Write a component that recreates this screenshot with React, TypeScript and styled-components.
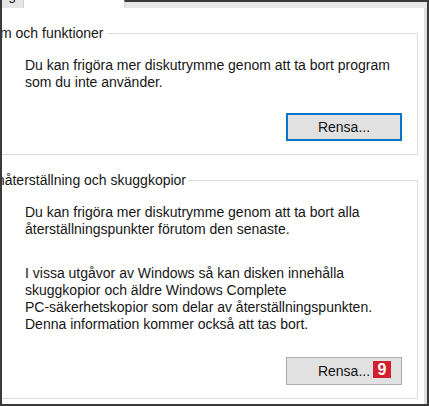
import styled, { createGlobalStyle } from "styled-components";

const GlobalStyle = createGlobalStyle`
  html, body {
    margin: 0;
    padding: 0;
    background: #ffffff;
  }
  body {
    font-family: "Liberation Sans", Arial, sans-serif;
    color: #161616;
  }
`;

const App = () => {
  return (
    <>
      <GlobalStyle />
      <Frame>
        <TabStrip>
          <Tab>
            <TabLabel>Diskrensning</TabLabel>
          </Tab>
          <ActiveTab />
          <TabFill />
        </TabStrip>
        <Panel>
          <GroupBox $top={17}>
            <Legend>Program och funktioner</Legend>
            <GroupBody>
              <Text>
                Du kan frigöra mer diskutrymme genom att ta bort program
                <br />
                som du inte använder.
              </Text>
              <ButtonRow $gap={22}>
                <Button $focused>Rensa...</Button>
              </ButtonRow>
            </GroupBody>
          </GroupBox>
          <GroupBox $top={17}>
            <Legend>Systemåterställning och skuggkopior</Legend>
            <GroupBody>
              <Text>
                Du kan frigöra mer diskutrymme genom att ta bort alla
                <br />
                återställningspunkter förutom den senaste.
              </Text>
              <Text $gap={27}>
                I vissa utgåvor av Windows så kan disken innehålla
                <br />
                skuggkopior och äldre Windows Complete
                <br />
                PC-säkerhetskopior som delar av återställningspunkten.
                <br />
                Denna information kommer också att tas bort.
              </Text>
              <ButtonRow $gap={24}>
                <Button>
                  Rensa...
                  <Badge>9</Badge>
                </Button>
              </ButtonRow>
            </GroupBody>
          </GroupBox>
        </Panel>
      </Frame>
    </>
  );
};

export default App;

const Frame = styled.div`
  width: 429px;
  height: 406px;
  box-sizing: border-box;
  border: 2px solid #3a3a3a;
  border-top: none;
  overflow: hidden;
  display: flex;
  flex-direction: column;
  background: #ffffff;
`;

const TabStrip = styled.div`
  display: flex;
  height: 8px;
  flex-shrink: 0;
`;

const Tab = styled.div`
  width: 22px;
  box-sizing: border-box;
  background: #e6e6e6;
  border-right: 1px solid #d2d2d2;
  overflow: hidden;
  display: flex;
  justify-content: flex-end;
  padding-right: 7px;
`;

const TabLabel = styled.span`
  font-size: 14px;
  line-height: 14px;
  margin-top: -12px;
  white-space: nowrap;
  color: #222;
`;

const ActiveTab = styled.div`
  width: 100px;
  background: #ffffff;
`;

const TabFill = styled.div`
  flex: 1;
  box-sizing: border-box;
  background: #e8e8e8;
  border-top: 2px solid #3a3a3a;
  border-left: 1px solid #d6d6d6;
`;

const Panel = styled.div`
  flex: 1;
  background: #ffffff;
  border-right: 3px solid #dedede;
  display: flex;
  flex-direction: column;
`;

const GroupBox = styled.fieldset<{ $top: number }>`
  margin: ${(p) => p.$top}px 6px 0 -56px;
  padding: 0;
  min-width: 0;
  border: 1px solid #dcdcdc;
`;

const Legend = styled.legend`
  margin-left: 8px;
  padding: 0 3px;
  font-size: 14px;
  line-height: 16px;
  white-space: nowrap;
  color: #161616;
`;

const GroupBody = styled.div`
  padding: 16px 15px 13px 78px;
  display: flex;
  flex-direction: column;
`;

const Text = styled.p<{ $gap?: number }>`
  margin: ${(p) => p.$gap ?? 0}px 0 0;
  font-size: 14px;
  line-height: 17px;
  white-space: nowrap;
`;

const ButtonRow = styled.div<{ $gap: number }>`
  display: flex;
  justify-content: flex-end;
  margin-top: ${(p) => p.$gap}px;
`;

const Button = styled.button<{ $focused?: boolean }>`
  position: relative;
  width: 116px;
  height: 28px;
  box-sizing: border-box;
  padding: 0;
  background: #e1e1e1;
  border: ${(p) => (p.$focused ? "2px solid #0a74c9" : "1px solid #adadad")};
  font-family: "Liberation Sans", Arial, sans-serif;
  font-size: 14px;
  color: #161616;
  cursor: default;
`;

const Badge = styled.span`
  position: absolute;
  top: 3px;
  left: 86px;
  width: 18px;
  height: 17px;
  background: #d21f2d;
  color: #ffffff;
  font-weight: bold;
  font-size: 16px;
  line-height: 17px;
  text-align: center;
`;
